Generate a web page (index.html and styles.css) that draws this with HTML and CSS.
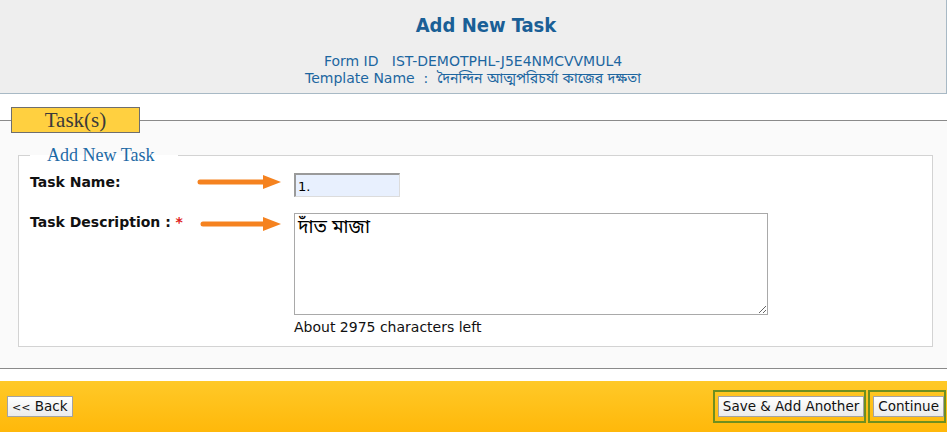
FILE: index.html
```html
<!DOCTYPE html>
<html>
<head>
<meta charset="utf-8">
<link rel="stylesheet" href="styles.css">
</head>
<body>
<div class="header">
  <h1 class="title">Add New Task</h1>
  <div class="meta">Form ID &nbsp; IST-DEMOTPHL-J5E4NMCVVMUL4</div>
  <div class="meta">Template Name &nbsp;: &nbsp;দৈনন্দিন আত্মপরিচর্যা কাজের দক্ষতা</div>
</div>
<fieldset class="section">
  <legend class="section-tab"><span class="section-tab-text">Task(s)</span></legend>
  <fieldset class="panel">
    <legend class="panel-title">Add New Task</legend>
    <div class="row">
      <label class="label">Task Name:</label>
      <svg class="arrow" width="87" height="16" viewBox="0 0 87 16"><line x1="3" y1="8" x2="68" y2="8" stroke="#f5821f" stroke-width="5" stroke-linecap="round"/><polygon points="66,1 84,8 66,15" fill="#f5821f"/></svg>
      <input class="name-input" type="text" value="1.">
    </div>
    <div class="row">
      <label class="label">Task Description : <span class="req">*</span></label>
      <svg class="arrow arrow-low" width="87" height="16" viewBox="0 0 87 16"><line x1="6" y1="8" x2="68" y2="8" stroke="#f5821f" stroke-width="5" stroke-linecap="round"/><polygon points="66,1 84,8 66,15" fill="#f5821f"/></svg>
      <div class="desc">
        <textarea class="desc-input">দাঁত মাজা</textarea>
        <div class="chars">About 2975 characters left</div>
      </div>
    </div>
  </fieldset>
</fieldset>
<div class="footer">
  <button class="btn btn-back"><span class="chev">&lt;&lt;</span> Back</button>
  <div class="actions">
    <span class="hl"><button class="btn">Save &amp; Add Another</button></span>
    <span class="hl"><button class="btn">Continue</button></span>
  </div>
</div>
</body>
</html>
```
FILE: styles.css
```css
html, body {
  margin: 0;
  padding: 0;
  background: #ffffff;
  font-family: "DejaVu Sans", Verdana, "Noto Sans Bengali", "Noto Serif Bengali", "Lohit Bengali", "FreeSerif", sans-serif;
}

.header {
  box-sizing: border-box;
  width: 947px;
  height: 94px;
  background: #eeeeee;
  border-right: 1px solid #a8b9c5;
  border-bottom: 1px solid #a8b9c5;
  text-align: center;
  padding-top: 13px;
  color: #1c66a0;
}

.title {
  margin: 0 0 16px 0;
  padding-left: 26px;
  font-family: "DejaVu Sans Condensed", "DejaVu Sans", sans-serif;
  font-size: 20px;
  line-height: 24px;
  font-weight: bold;
  color: #1a5f96;
}

.meta {
  font-family: "DejaVu Sans", "Noto Sans Bengali", "Lohit Bengali", "FreeSerif", sans-serif;
  font-size: 14px;
  line-height: 17px;
}

.section {
  margin: 13px 0 12px 0;
  padding: 12px 14px 21px 18px;
  border: none;
  border-top: 1px solid #8a8a8a;
  border-bottom: 1px solid #8a8a8a;
  background: #fafafa;
}

.section-tab {
  box-sizing: border-box;
  margin-left: -7px;
  width: 129px;
  height: 26px;
  padding: 0;
  border: 1px solid #6e6e6e;
  background: #ffd040;
  text-align: left;
}

.section-tab-text {
  display: block;
  text-align: center;
  font-family: "Liberation Serif", "DejaVu Serif", serif;
  font-size: 21px;
  line-height: 24px;
  color: #3a3a3a;
}

.panel {
  margin: 0;
  padding: 8px 11px 10px 11px;
  border: 1px solid #d3d3d3;
  background: #ffffff;
}

.panel-title {
  padding: 0 24px 0 17px;
  font-family: "Liberation Serif", "DejaVu Serif", serif;
  font-size: 18px;
  line-height: 20px;
  color: #1e6aa6;
}

.row {
  display: flex;
  align-items: flex-start;
  margin-bottom: 16px;
}

.row:last-child {
  margin-bottom: 0;
}

.label {
  width: 167px;
  flex: none;
  padding-top: 1px;
  font-size: 14px;
  line-height: 17px;
  font-weight: bold;
  color: #111111;
}

.req {
  color: #e02020;
}

.arrow {
  flex: none;
  margin-top: 1px;
  margin-right: 10px;
}

.arrow-low {
  margin-top: 3px;
}

.name-input {
  box-sizing: border-box;
  width: 106px;
  height: 24px;
  margin: 0;
  padding: 2px 2px 0 2px;
  border-style: solid;
  border-width: 2px 1px 1px 2px;
  border-color: #9a9a9a #dcdcdc #dcdcdc #9a9a9a;
  background: #e8f0fe;
  font-family: "DejaVu Sans", sans-serif;
  font-size: 13px;
  color: #000;
}

.desc {
  display: flex;
  flex-direction: column;
}

.desc-input {
  box-sizing: border-box;
  width: 474px;
  height: 102px;
  margin: 0;
  padding: 4px 3px 2px 3px;
  border: 1px solid #a9a9a9;
  background: #ffffff;
  font-family: "Noto Sans Bengali", "Noto Serif Bengali", "Lohit Bengali", "FreeSerif", "DejaVu Sans", sans-serif;
  font-size: 19px;
  line-height: 22px;
  color: #000;
  resize: both;
}

.chars {
  margin-top: 4px;
  font-size: 14px;
  line-height: 17px;
  color: #111;
}

.footer {
  height: 51px;
  display: flex;
  align-items: center;
  justify-content: space-between;
  padding-left: 7px;
  padding-right: 1px;
  background: linear-gradient(#ffc928, #ffb80a);
}

.actions {
  display: flex;
  gap: 2px;
  align-items: center;
}

.hl {
  display: flex;
  padding: 4px 0 4px 3px;
  border: 2px solid #6f8f1f;
}

.btn {
  height: 21px;
  margin: 0;
  padding: 0 4px;
  border: 1px solid #a3a3a3;
  background: linear-gradient(#ffffff, #ebebeb);
  font-family: "DejaVu Sans", sans-serif;
  font-size: 13.5px;
  line-height: 19px;
  color: #111;
  cursor: pointer;
}

.chev {
  font-size: 11px;
}
```
